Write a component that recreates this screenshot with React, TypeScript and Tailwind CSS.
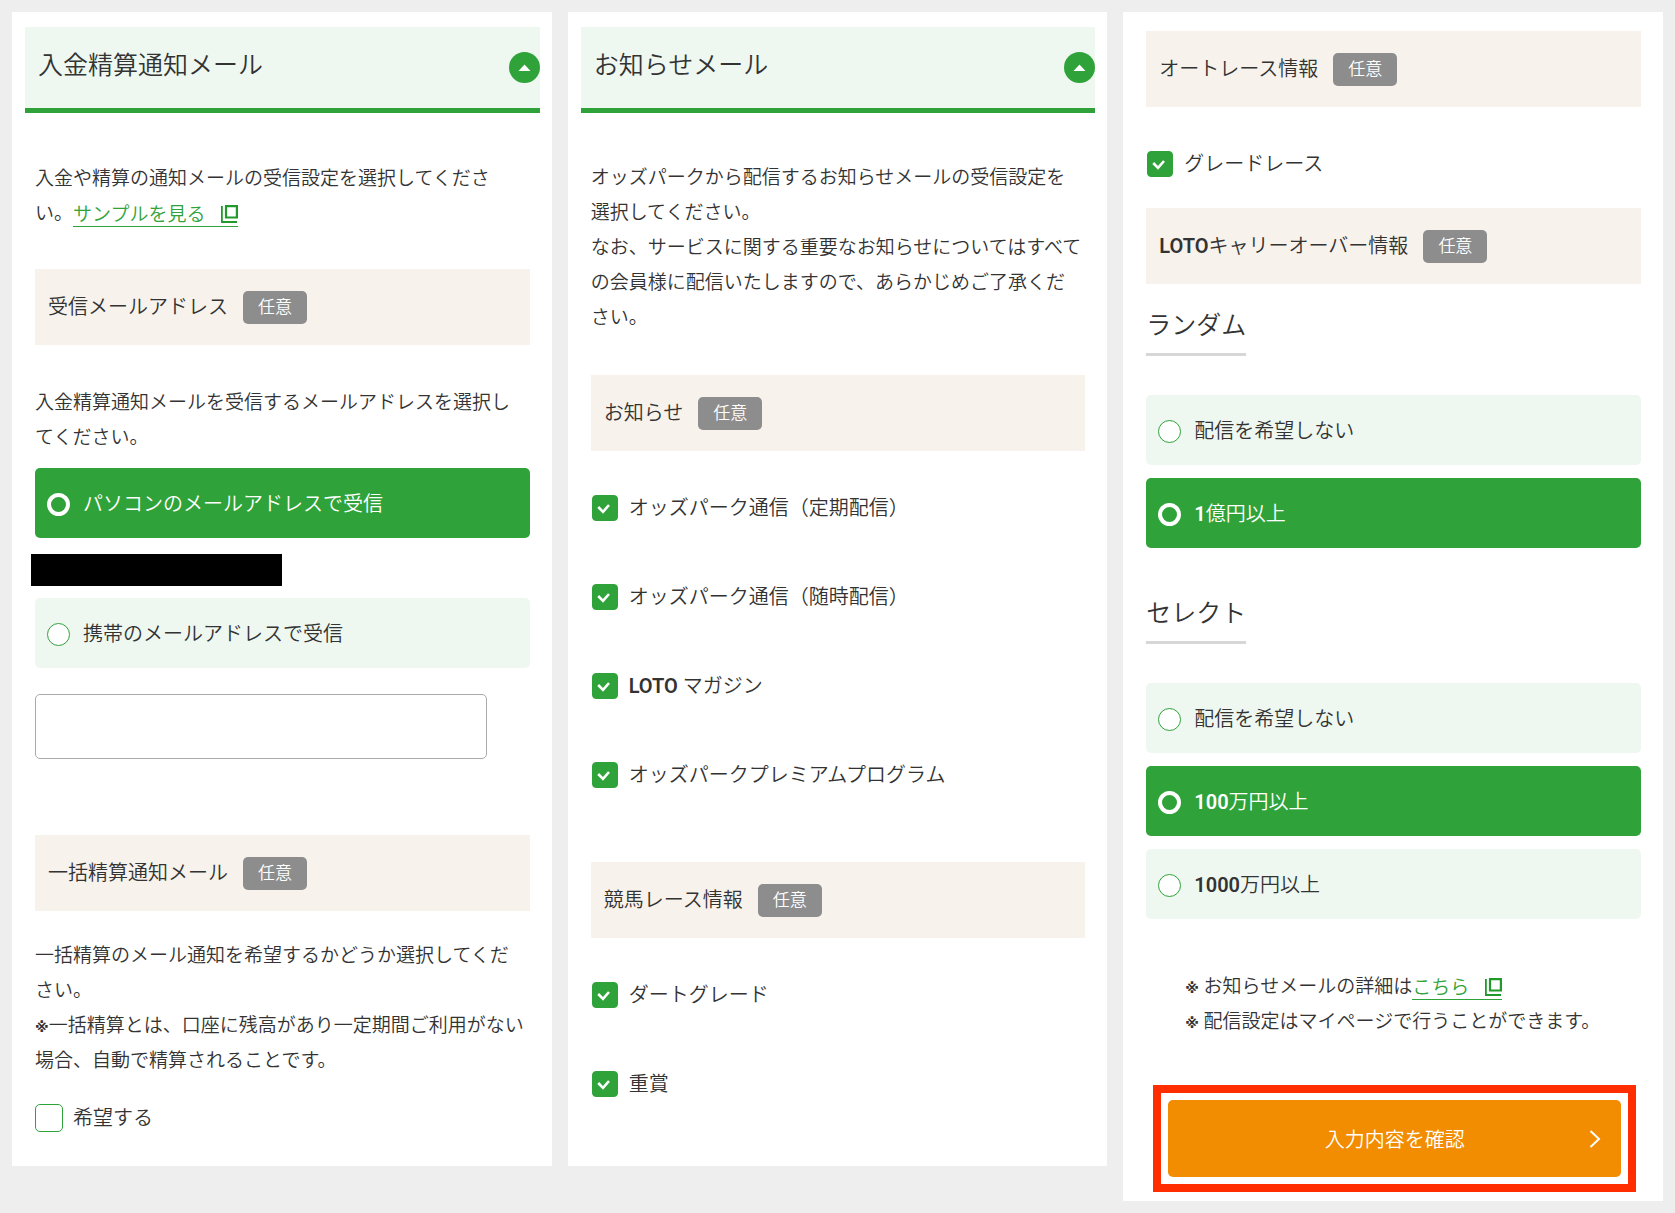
import { useId, useState, type ReactNode } from 'react';

function Panel({ className, children }: { className: string; children: ReactNode }) {
  return <section className={`flex flex-col bg-white ${className}`}>{children}</section>;
}

function PanelHeader({ children }: { children: ReactNode }) {
  return (
    <h1 className="mr-3 ml-[13px] border-b-5 border-[#2fa339] bg-[#eef8f1]">
      <button type="button" aria-expanded="true" className="flex h-[81px] w-full items-center justify-between pl-[13px] text-left">
        <span className="pb-1 text-[25px]">{children}</span>
        <svg viewBox="0 0 31 31" className="size-[31px]" aria-hidden="true">
          <circle cx="15.5" cy="15.5" r="15.5" fill="#2fa339" />
          <path d="M9.5 19 15.5 12.5 21.5 19Z" fill="#fff" />
        </svg>
      </button>
    </h1>
  );
}

function SectionBar({ className = '', children }: { className?: string; children: ReactNode }) {
  return (
    <h2 className={`flex h-[76px] items-center gap-[15px] bg-[#f7f2eb] pl-[13px] text-[20px] ${className}`}>
      <span>{children}</span>
      <span className="flex h-[33px] w-16 items-center justify-center rounded-[5px] bg-[#8d8d8d] text-[17px] text-white">任意</span>
    </h2>
  );
}

function Radio({ name, checked, onChange, children }: { name: string; checked: boolean; onChange: () => void; children: ReactNode }) {
  return (
    <label className="flex h-[70px] items-center gap-[13px] rounded-[5px] bg-[#eef8f1] pt-0.5 pl-3 text-[20px] has-checked:bg-[#2fa339] has-checked:text-white">
      <input
        type="radio"
        name={name}
        checked={checked}
        onChange={onChange}
        className="size-[23px] appearance-none rounded-full border border-[#2fa339] bg-white checked:border-4 checked:border-white checked:bg-[#2fa339]"
      />
      <span>{children}</span>
    </label>
  );
}

function RadioGroup({ label, options, initial }: { label: string; options: ReactNode[]; initial: number }) {
  const name = useId();
  const [selected, setSelected] = useState(initial);
  return (
    <div role="radiogroup" aria-label={label} className="mt-[39px] flex flex-col gap-[13px]">
      {options.map((option, i) => (
        <Radio key={i} name={name} checked={selected === i} onChange={() => setSelected(i)}>
          {option}
        </Radio>
      ))}
    </div>
  );
}

function Check({ children }: { children: ReactNode }) {
  return (
    <label className="flex items-center gap-[11px] pl-px text-[20px] leading-[26px]">
      <span className="grid">
        <input
          type="checkbox"
          defaultChecked
          className="peer col-start-1 row-start-1 size-[26px] appearance-none rounded-[4px] border border-[#2fa339] bg-white checked:bg-[#2fa339]"
        />
        <svg viewBox="0 0 26 26" className="pointer-events-none invisible col-start-1 row-start-1 size-[26px] peer-checked:visible" aria-hidden="true">
          <path d="M6.2 12 11 16.8 17 10" fill="none" stroke="#fff" strokeWidth="2.6" />
        </svg>
      </span>
      <span>{children}</span>
    </label>
  );
}

function SubHeading({ className, children }: { className: string; children: ReactNode }) {
  return <h3 className={`self-start border-b-3 border-[#d6d6d6] pb-[10px] text-[25px] leading-[35px] ${className}`}>{children}</h3>;
}

function ExternalLink({ children }: { children: ReactNode }) {
  return (
    <a href="#" className="inline-flex h-[25px] items-center gap-4 border-b border-[#2fa339] align-middle leading-[25px] text-[#2fa339]">
      {children}
      <svg viewBox="0 0 17 18" className="h-[18px] w-[17px]" fill="none" stroke="#219a2c" strokeWidth="2.2" aria-hidden="true">
        <path d="M5 1.1H15.9V12.5H5Z" />
        <path d="M.9 1V17H16" strokeWidth="1.8" />
      </svg>
    </a>
  );
}

function Note() {
  return <span className="font-['DejaVu_Sans',sans-serif] text-[14px] leading-none font-bold">※</span>;
}

const B = ({ children }: { children: ReactNode }) => <span className="font-semibold">{children}</span>;

export default function App() {
  const [address, setAddress] = useState('pc');
  return (
    <main className="grid min-h-screen grid-cols-3 items-start gap-4 bg-[#eee] p-3 font-['Roboto','Noto_Sans_CJK_JP',sans-serif] text-[19px] leading-[35px] font-[350] text-[#333]">
      <Panel className="pt-[15px] pb-[34px]">
        <PanelHeader>入金精算通知メール</PanelHeader>
        <div className="flex flex-col pr-[22px] pl-[23px]">
          <p className="mt-12">
            入金や精算の通知メールの受信設定を選択してくださ
            <br />
            い。<ExternalLink>サンプルを見る</ExternalLink>
          </p>
          <SectionBar className="mt-[38px]">受信メールアドレス</SectionBar>
          <p className="mt-10">
            入金精算通知メールを受信するメールアドレスを選択し
            <br />
            てください。
          </p>
          <div role="radiogroup" aria-label="受信メールアドレス" className="mt-[13px] flex flex-col">
            <Radio name="address" checked={address === 'pc'} onChange={() => setAddress('pc')}>
              パソコンのメールアドレスで受信
            </Radio>
            <div className="mt-4 mb-3 -ml-1 h-8 w-[251px] bg-black" />
            <Radio name="address" checked={address === 'mobile'} onChange={() => setAddress('mobile')}>
              携帯のメールアドレスで受信
            </Radio>
          </div>
          <input
            type="email"
            aria-label="携帯のメールアドレス"
            className="mt-[26px] mr-[43px] h-[65px] rounded-[5px] border border-[#aaa] bg-white px-3 text-[20px]"
          />
          <SectionBar className="mt-[76px]">一括精算通知メール</SectionBar>
          <p className="mt-[27px]">
            一括精算のメール通知を希望するかどうか選択してくだ
            <br />
            さい。
            <br />
            <Note />
            一括精算とは、口座に残高があり一定期間ご利用がない
            <br />
            場合、自動で精算されることです。
          </p>
          <label className="mt-[26px] flex items-center gap-[10px] text-[20px] leading-7">
            <input
              type="checkbox"
              className="size-7 appearance-none rounded-[5px] border border-[#2fa339] bg-white checked:bg-[#2fa339]"
            />
            希望する
          </label>
        </div>
      </Panel>

      <Panel className="pt-[15px] pb-[69px]">
        <PanelHeader>お知らせメール</PanelHeader>
        <div className="flex flex-col pr-[22px] pl-[23px]">
          <p className="mt-[47px]">
            オッズパークから配信するお知らせメールの受信設定を
            <br />
            選択してください。
            <br />
            なお、サービスに関する重要なお知らせについてはすべて
            <br />
            の会員様に配信いたしますので、あらかじめご了承くだ
            <br />
            さい。
          </p>
          <SectionBar className="mt-10">お知らせ</SectionBar>
          <div className="mt-11 flex flex-col gap-[63px]">
            <Check>オッズパーク通信（定期配信）</Check>
            <Check>オッズパーク通信（随時配信）</Check>
            <Check>
              <B>LOTO</B> マガジン
            </Check>
            <Check>オッズパークプレミアムプログラム</Check>
          </div>
          <SectionBar className="mt-[74px]">競馬レース情報</SectionBar>
          <div className="mt-11 flex flex-col gap-[63px]">
            <Check>ダートグレード</Check>
            <Check>重賞</Check>
          </div>
        </div>
      </Panel>

      <Panel className="pt-[19px] pb-[9px]">
        <div className="flex flex-col pr-[22px] pl-[23px]">
          <SectionBar>オートレース情報</SectionBar>
          <div className="mt-11">
            <Check>グレードレース</Check>
          </div>
          <SectionBar className="mt-[31px]">
            <B>LOTO</B>キャリーオーバー情報
          </SectionBar>
          <SubHeading className="mt-6">ランダム</SubHeading>
          <RadioGroup
            label="ランダム"
            initial={1}
            options={['配信を希望しない', <><B>1</B>億円以上</>]}
          />
          <SubHeading className="mt-12">セレクト</SubHeading>
          <RadioGroup
            label="セレクト"
            initial={1}
            options={['配信を希望しない', <><B>100</B>万円以上</>, <><B>1000</B>万円以上</>]}
          />
          <ul className="mt-[50px] pl-[39px]">
            <li>
              <Note /> お知らせメールの詳細は<ExternalLink>こちら</ExternalLink>
            </li>
            <li>
              <Note /> 配信設定はマイページで行うことができます。
            </li>
          </ul>
          <div className="mt-[46px] mr-[5px] ml-[7px] border-8 border-[#ff2d00] p-[7px]">
            <button type="submit" className="grid h-[77px] w-full grid-cols-[1fr_auto_1fr] items-center rounded-[5px] bg-[#f28c00] px-5 text-[20px] text-white">
              <span className="col-start-2 pt-1">入力内容を確認</span>
              <svg viewBox="0 0 12 18" className="h-[18px] w-3 justify-self-end" fill="none" stroke="#fff" strokeWidth="2" aria-hidden="true">
                <path d="M1.5 1 10 9 1.5 17" />
              </svg>
            </button>
          </div>
        </div>
      </Panel>
    </main>
  );
}
